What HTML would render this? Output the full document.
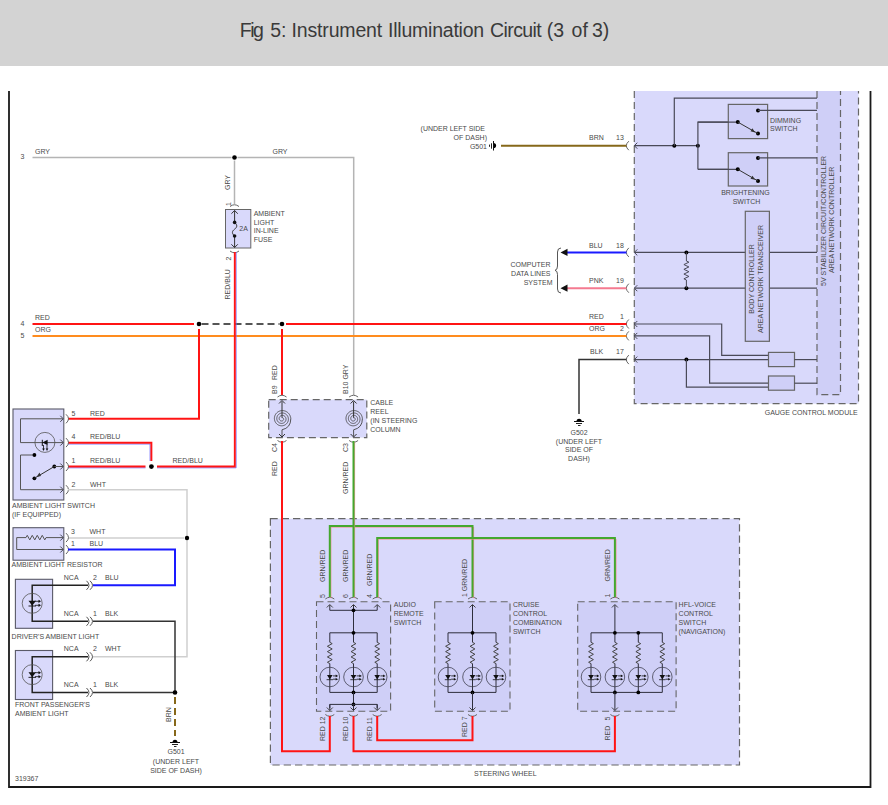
<!DOCTYPE html><html><head><meta charset="utf-8"><style>html,body{margin:0;padding:0;background:#fff;}svg{display:block}</style></head><body>
<svg width="888" height="805" viewBox="0 0 888 805" font-family='"Liberation Sans", sans-serif'>
<rect x="0" y="0" width="888" height="66" fill="#d3d3d3"/>
<text x="239.79999999999998" y="37" font-size="19.5" fill="#3a3a3a" textLength="24.0" lengthAdjust="spacing">Fig</text>
<text x="270.2" y="37" font-size="19.5" fill="#3a3a3a">5:</text>
<text x="291.59999999999997" y="37" font-size="19.5" fill="#3a3a3a" textLength="90.6" lengthAdjust="spacing">Instrument</text>
<text x="388.0" y="37" font-size="19.5" fill="#3a3a3a" textLength="96.2" lengthAdjust="spacing">Illumination</text>
<text x="490.09999999999997" y="37" font-size="19.5" fill="#3a3a3a" textLength="51.6" lengthAdjust="spacing">Circuit</text>
<text x="546.8000000000001" y="37" font-size="19.5" fill="#3a3a3a">(3</text>
<text x="571.6" y="37" font-size="19.5" fill="#3a3a3a">of</text>
<text x="591.9000000000001" y="37" font-size="19.5" fill="#3a3a3a">3)</text>
<path d="M9,91 L9,787 L870.5,787 L870.5,91" fill="none" stroke="#1a1a1a" stroke-width="1.8" />
<rect x="634.3" y="91" width="224.2" height="312.7" fill="#d9d9fb"/>
<path d="M634.3,91 L634.3,403.7 L858.5,403.7 L858.5,91" fill="none" stroke="#666" stroke-width="1.2" stroke-dasharray="7,4"/>
<rect x="817" y="91" width="23.5" height="303.7" fill="#cfcff7" stroke="none"/>
<path d="M817,91 L817,394.7 L840.5,394.7 L840.5,91" fill="none" stroke="#666" stroke-width="1.2" stroke-dasharray="7,4"/>
<text transform="translate(826.0,286) rotate(-90)" text-anchor="start" font-size="7" fill="#4a4a4a">5V STABILIZER CIRCUIT/CONTROLLER</text>
<text transform="translate(834.3,273) rotate(-90)" text-anchor="start" font-size="7" fill="#4a4a4a">AREA NETWORK CONTROLLER</text>
<path d="M634.3,145.7 L697.9,145.7" fill="none" stroke="#4a4a58" stroke-width="1.2" />
<circle cx="674.3" cy="145.7" r="2" fill="#000"/>
<circle cx="697.9" cy="145.7" r="2" fill="#000"/>
<path d="M674.3,145.7 L674.3,98.1 L817,98.1" fill="none" stroke="#4a4a58" stroke-width="1.2" />
<path d="M697.9,169.3 L697.9,122.1 L737.8,122.1" fill="none" stroke="#4a4a58" stroke-width="1.2" />
<path d="M697.9,169.3 L737.8,169.3" fill="none" stroke="#4a4a58" stroke-width="1.2" />
<rect x="728.3" y="104.4" width="39.30000000000007" height="34.19999999999999" fill="#cfcff7" stroke="#666" stroke-width="1.2" />
<rect x="728.3" y="152.7" width="39.30000000000007" height="33.30000000000001" fill="#cfcff7" stroke="#666" stroke-width="1.2" />
<path d="M697.9,122.1 L737.8,122.1" fill="none" stroke="#4a4a58" stroke-width="1.2" />
<path d="M697.9,169.3 L737.8,169.3" fill="none" stroke="#4a4a58" stroke-width="1.2" />
<circle cx="737.8" cy="122.1" r="2" fill="#000"/>
<circle cx="758" cy="110.4" r="2" fill="#000"/>
<circle cx="758" cy="133.6" r="2" fill="#000"/>
<path d="M758,110.4 L817,110.4" fill="none" stroke="#4a4a58" stroke-width="1.2" />
<path d="M737.8,122.1 L758,133.6" fill="none" stroke="#333" stroke-width="1" />
<path d="M755,132.4 L750.5,131.29999999999998 L752.5,128.29999999999998 Z" fill="#333"/>
<circle cx="737.8" cy="169.3" r="2" fill="#000"/>
<circle cx="758" cy="157.9" r="2" fill="#000"/>
<circle cx="758" cy="181" r="2" fill="#000"/>
<path d="M758,157.9 L817,157.9" fill="none" stroke="#4a4a58" stroke-width="1.2" />
<path d="M737.8,169.3 L758,181" fill="none" stroke="#333" stroke-width="1" />
<path d="M755,179.8 L750.5,178.7 L752.5,175.7 Z" fill="#333"/>
<text x="770" y="123" text-anchor="start" font-size="7" fill="#4a4a4a">DIMMING</text>
<text x="770" y="130.8" text-anchor="start" font-size="7" fill="#4a4a4a">SWITCH</text>
<text x="745.5" y="195.2" text-anchor="middle" font-size="7" fill="#4a4a4a">BRIGHTENING</text>
<text x="746.5" y="203.6" text-anchor="middle" font-size="7" fill="#4a4a4a">SWITCH</text>
<path d="M634.3,252.4 L817,252.4" fill="none" stroke="#4a4a58" stroke-width="1.2" />
<path d="M634.3,288.2 L817,288.2" fill="none" stroke="#4a4a58" stroke-width="1.2" />
<circle cx="686.4" cy="252.4" r="2" fill="#000"/>
<circle cx="686.4" cy="288.2" r="2" fill="#000"/>
<path d="M686.4,261 L688.9,262.1875 L683.9,264.5625 L688.9,266.9375 L683.9,269.3125 L688.9,271.6875 L683.9,274.0625 L688.9,276.4375 L683.9,278.8125 L686.4,280" fill="none" stroke="#4a4a58" stroke-width="1" />
<path d="M686.4,252.4 L686.4,261" fill="none" stroke="#4a4a58" stroke-width="1" />
<path d="M686.4,280 L686.4,288.2" fill="none" stroke="#4a4a58" stroke-width="1" />
<rect x="745.3" y="211.3" width="24.100000000000023" height="130.0" fill="#cfcff7" stroke="#666" stroke-width="1.2" />
<text transform="translate(753.8,279) rotate(-90)" text-anchor="middle" font-size="7" fill="#4a4a4a">BODY CONTROLLER</text>
<text transform="translate(762.9,279) rotate(-90)" text-anchor="middle" font-size="7" fill="#4a4a4a">AREA NETWORK TRANSCEIVER</text>
<path d="M634.3,324 L721.7,324 L721.7,355.4 L768.5,355.4" fill="none" stroke="#4a4a58" stroke-width="1.2" />
<path d="M634.3,335.9 L709.6,335.9 L709.6,383.2 L768.5,383.2" fill="none" stroke="#4a4a58" stroke-width="1.2" />
<path d="M634.3,359.6 L768.5,359.6" fill="none" stroke="#4a4a58" stroke-width="1.2" />
<circle cx="686.4" cy="359.6" r="2" fill="#000"/>
<path d="M686.4,359.6 L686.4,387.1 L768.5,387.1" fill="none" stroke="#4a4a58" stroke-width="1.2" />
<rect x="768.5" y="352.4" width="26.0" height="14.200000000000045" fill="#cfcff7" stroke="#666" stroke-width="1.2" />
<rect x="768.5" y="376" width="26.0" height="14.199999999999989" fill="#cfcff7" stroke="#666" stroke-width="1.2" />
<path d="M794.5,359.6 L817,359.6" fill="none" stroke="#4a4a58" stroke-width="1.2" />
<path d="M794.5,383.2 L817,383.2" fill="none" stroke="#4a4a58" stroke-width="1.2" />
<text x="857.8" y="415" text-anchor="end" font-size="7" fill="#4a4a4a">GAUGE CONTROL MODULE</text>
<path d="M637.3,142.7 L634.3,145.7 L637.3,148.7" fill="none" stroke="#4a4a58" stroke-width="1" />
<path d="M628.8,141.2 Q623.8,145.7 628.8,150.2" fill="none" stroke="#666" stroke-width="1"/>
<path d="M637.3,249.4 L634.3,252.4 L637.3,255.4" fill="none" stroke="#4a4a58" stroke-width="1" />
<path d="M628.8,247.9 Q623.8,252.4 628.8,256.9" fill="none" stroke="#666" stroke-width="1"/>
<path d="M637.3,285.2 L634.3,288.2 L637.3,291.2" fill="none" stroke="#4a4a58" stroke-width="1" />
<path d="M628.8,283.7 Q623.8,288.2 628.8,292.7" fill="none" stroke="#666" stroke-width="1"/>
<path d="M637.3,321 L634.3,324 L637.3,327" fill="none" stroke="#4a4a58" stroke-width="1" />
<path d="M628.8,319.5 Q623.8,324 628.8,328.5" fill="none" stroke="#666" stroke-width="1"/>
<path d="M637.3,332.9 L634.3,335.9 L637.3,338.9" fill="none" stroke="#4a4a58" stroke-width="1" />
<path d="M628.8,331.4 Q623.8,335.9 628.8,340.4" fill="none" stroke="#666" stroke-width="1"/>
<path d="M637.3,356.6 L634.3,359.6 L637.3,362.6" fill="none" stroke="#4a4a58" stroke-width="1" />
<path d="M628.8,355.1 Q623.8,359.6 628.8,364.1" fill="none" stroke="#666" stroke-width="1"/>
<path d="M501,145.7 L626.5,145.7" fill="none" stroke="#86681a" stroke-width="2" />
<path d="M493.5,143 A2.6,2.6 0 1 1 493.5,148.2 Z" fill="#000"/>
<path d="M493.5,141 L493.5,150.5" fill="none" stroke="#111" stroke-width="1" />
<path d="M491.5,143.3 L491.5,148.7" fill="none" stroke="#222" stroke-width="1" />
<path d="M489.5,144.6 L489.5,146.8" fill="none" stroke="#222" stroke-width="1" />
<text x="487" y="148.5" text-anchor="end" font-size="7" fill="#4a4a4a">G501</text>
<text x="485" y="131" text-anchor="end" font-size="7" fill="#4a4a4a">(UNDER LEFT SIDE</text>
<text x="487" y="139.5" text-anchor="end" font-size="7" fill="#4a4a4a">OF DASH)</text>
<text x="589" y="139.5" text-anchor="start" font-size="7" fill="#4a4a4a">BRN</text>
<text x="616" y="139.5" text-anchor="start" font-size="7" fill="#4a4a4a">13</text>
<path d="M566,252.4 L626.5,252.4" fill="none" stroke="#1a1aff" stroke-width="2" />
<path d="M560.5,252.4 L567.5,248.8 L567.5,256 Z" fill="#111"/>
<path d="M566,288.2 L626.5,288.2" fill="none" stroke="#f47a90" stroke-width="2" />
<path d="M560.5,288.2 L567.5,284.6 L567.5,291.8 Z" fill="#111"/>
<text x="589" y="247.5" text-anchor="start" font-size="7" fill="#4a4a4a">BLU</text>
<text x="616" y="247.5" text-anchor="start" font-size="7" fill="#4a4a4a">18</text>
<text x="589" y="282.5" text-anchor="start" font-size="7" fill="#4a4a4a">PNK</text>
<text x="616" y="282.5" text-anchor="start" font-size="7" fill="#4a4a4a">19</text>
<path d="M561,248 Q557.5,248 557.5,252 L557.5,266 Q557.5,270 555,270.3 Q557.5,270.6 557.5,274.6 L557.5,289 Q557.5,293 561,293" fill="none" stroke="#444" stroke-width="0.9"/>
<text x="550.5" y="267.3" text-anchor="end" font-size="7" fill="#4a4a4a">COMPUTER</text>
<text x="550.5" y="276.3" text-anchor="end" font-size="7" fill="#4a4a4a">DATA LINES</text>
<text x="552.5" y="285.3" text-anchor="end" font-size="7" fill="#4a4a4a">SYSTEM</text>
<path d="M626.5,359.6 L579,359.6 L579,414" fill="none" stroke="#333" stroke-width="1.5" />
<text x="590" y="354" text-anchor="start" font-size="7" fill="#4a4a4a">BLK</text>
<text x="616" y="354" text-anchor="start" font-size="7" fill="#4a4a4a">17</text>
<path d="M576.5,421.4 A2.6,2.6 0 1 1 581.7,421.4 Z" fill="#000"/>
<path d="M574,421.5 L584,421.5" fill="none" stroke="#111" stroke-width="1" />
<path d="M576,423.5 L582,423.5" fill="none" stroke="#222" stroke-width="1" />
<path d="M578,425.5 L580.5,425.5" fill="none" stroke="#222" stroke-width="1" />
<text x="579" y="435" text-anchor="middle" font-size="7" fill="#4a4a4a">G502</text>
<text x="579" y="443.8" text-anchor="middle" font-size="7" fill="#4a4a4a">(UNDER LEFT</text>
<text x="579" y="452.3" text-anchor="middle" font-size="7" fill="#4a4a4a">SIDE OF</text>
<text x="579" y="460.8" text-anchor="middle" font-size="7" fill="#4a4a4a">DASH)</text>
<text x="22.5" y="159" text-anchor="middle" font-size="7" fill="#4a4a4a">3</text>
<path d="M32.5,157.5 L231.5,157.5" fill="none" stroke="#b4b4b4" stroke-width="1.5" />
<path d="M237.5,157.5 L353.7,157.5 L353.7,395" fill="none" stroke="#b4b4b4" stroke-width="1.5" />
<circle cx="234.5" cy="157.5" r="2.3" fill="#000"/>
<text x="35" y="153.5" text-anchor="start" font-size="7" fill="#4a4a4a">GRY</text>
<text x="272.5" y="153.5" text-anchor="start" font-size="7" fill="#4a4a4a">GRY</text>
<path d="M234.5,160.5 L234.5,204" fill="none" stroke="#b4b4b4" stroke-width="1.5" />
<text transform="translate(229.5,190) rotate(-90)" text-anchor="start" font-size="7" fill="#4a4a4a">GRY</text>
<text transform="translate(230.5,206) rotate(-90)" text-anchor="start" font-size="7" fill="#4a4a4a">1</text>
<rect x="225.5" y="209.5" width="25.30000000000001" height="38.5" fill="#d9d9fb" stroke="#666" stroke-width="1" />
<path d="M230.0,206.5 Q234.5,203.0 239.0,206.5" fill="none" stroke="#666" stroke-width="1"/>
<path d="M230.0,251 Q234.5,254.5 239.0,251" fill="none" stroke="#666" stroke-width="1"/>
<path d="M234.6,210.5 L234.6,222" fill="none" stroke="#333" stroke-width="1" />
<path d="M234.6,236 L234.6,247.5" fill="none" stroke="#333" stroke-width="1" />
<path d="M231.4,213.7 L234.6,210.5 L237.79999999999998,213.7" fill="none" stroke="#333" stroke-width="1" />
<path d="M231.4,244.3 L234.6,247.5 L237.79999999999998,244.3" fill="none" stroke="#333" stroke-width="1" />
<path d="M234.6,222.4 C237.5,225 237.5,227 234.6,229.2 C231.7,231.4 231.7,233.4 234.6,236" fill="none" stroke="#333" stroke-width="1"/>
<circle cx="234.6" cy="222.4" r="1.8" fill="#111"/>
<circle cx="234.6" cy="236" r="1.8" fill="#111"/>
<text x="239.3" y="231.2" text-anchor="start" font-size="7" fill="#4a4a4a">2A</text>
<text x="253.7" y="216" text-anchor="start" font-size="7" fill="#4a4a4a">AMBIENT</text>
<text x="253.7" y="225" text-anchor="start" font-size="7" fill="#4a4a4a">LIGHT</text>
<text x="253.7" y="233" text-anchor="start" font-size="7" fill="#4a4a4a">IN-LINE</text>
<text x="253.7" y="242" text-anchor="start" font-size="7" fill="#4a4a4a">FUSE</text>
<text transform="translate(230.5,260.5) rotate(-90)" text-anchor="start" font-size="7" fill="#4a4a4a">2</text>
<text transform="translate(229.5,299.5) rotate(-90)" text-anchor="start" font-size="7" fill="#4a4a4a">RED/BLU</text>
<text x="22.5" y="325.5" text-anchor="middle" font-size="7" fill="#4a4a4a">4</text>
<text x="22.5" y="337.5" text-anchor="middle" font-size="7" fill="#4a4a4a">5</text>
<path d="M32.5,324 L194,324" fill="none" stroke="#ff1414" stroke-width="2" />
<circle cx="199" cy="324" r="2.3" fill="#000"/>
<circle cx="282" cy="324" r="2.3" fill="#000"/>
<path d="M201.5,324 L279.5,324" fill="none" stroke="#555" stroke-width="1.8" stroke-dasharray="7,4"/>
<path d="M286,324 L626.5,324" fill="none" stroke="#ff1414" stroke-width="2" />
<path d="M32.5,336 L626.5,336" fill="none" stroke="#ff8c1e" stroke-width="2" />
<text x="35" y="320" text-anchor="start" font-size="7" fill="#4a4a4a">RED</text>
<text x="35" y="332" text-anchor="start" font-size="7" fill="#4a4a4a">ORG</text>
<text x="589" y="318.7" text-anchor="start" font-size="7" fill="#4a4a4a">RED</text>
<text x="620" y="318.7" text-anchor="start" font-size="7" fill="#4a4a4a">1</text>
<text x="589" y="330.7" text-anchor="start" font-size="7" fill="#4a4a4a">ORG</text>
<text x="620" y="330.7" text-anchor="start" font-size="7" fill="#4a4a4a">2</text>
<path d="M199,329 L199,418.8 L68,418.8" fill="none" stroke="#ff1414" stroke-width="2" />
<path d="M236.1,252 L236.1,467.8 L157,467.8" fill="none" stroke="#7070ff" stroke-width="0.9" />
<path d="M234.8,252 L234.8,466.5 L157,466.5" fill="none" stroke="#ff1414" stroke-width="1.9" />
<circle cx="151.4" cy="466.6" r="2.4" fill="#000"/>
<path d="M145.5,467.8 L68,467.8" fill="none" stroke="#7070ff" stroke-width="0.9" />
<path d="M145.5,466.5 L68,466.5" fill="none" stroke="#ff1414" stroke-width="1.9" />
<path d="M68,444 L150.1,444 L150.1,461" fill="none" stroke="#7070ff" stroke-width="0.9" />
<path d="M68,442.7 L151.4,442.7 L151.4,461" fill="none" stroke="#ff1414" stroke-width="1.9" />
<text x="90" y="416" text-anchor="start" font-size="7" fill="#4a4a4a">RED</text>
<text x="90" y="439.2" text-anchor="start" font-size="7" fill="#4a4a4a">RED/BLU</text>
<text x="90" y="462.5" text-anchor="start" font-size="7" fill="#4a4a4a">RED/BLU</text>
<text x="172.5" y="462.5" text-anchor="start" font-size="7" fill="#4a4a4a">RED/BLU</text>
<text x="90" y="487" text-anchor="start" font-size="7" fill="#4a4a4a">WHT</text>
<text x="71.5" y="416" text-anchor="start" font-size="7" fill="#4a4a4a">5</text>
<text x="71.5" y="439.2" text-anchor="start" font-size="7" fill="#4a4a4a">4</text>
<text x="71.5" y="462.5" text-anchor="start" font-size="7" fill="#4a4a4a">1</text>
<text x="71.5" y="486.5" text-anchor="start" font-size="7" fill="#4a4a4a">2</text>
<path d="M282,329 L282,395" fill="none" stroke="#ff1414" stroke-width="2" />
<text transform="translate(276.5,380) rotate(-90)" text-anchor="start" font-size="7" fill="#4a4a4a">RED</text>
<text transform="translate(276.5,394) rotate(-90)" text-anchor="start" font-size="7" fill="#4a4a4a">B9</text>
<text transform="translate(347.8,394) rotate(-90)" text-anchor="start" font-size="7" fill="#4a4a4a">B10 GRY</text>
<rect x="268.7" y="399.6" width="98.10000000000002" height="38.0" fill="#d9d9fb" stroke="#666" stroke-width="1.2" stroke-dasharray="7,4"/>
<path d="M277.5,397 Q282,393.5 286.5,397" fill="none" stroke="#666" stroke-width="1"/>
<path d="M277.5,440.5 Q282,444.0 286.5,440.5" fill="none" stroke="#666" stroke-width="1"/>
<path d="M279,403.5 L282,400.5 L285,403.5" fill="none" stroke="#333" stroke-width="1" />
<path d="M279,434 L282,437 L285,434" fill="none" stroke="#333" stroke-width="1" />
<path d="M282.0,417.8 L282.09,417.77 L282.18,417.75 L282.28,417.74 L282.38,417.73 L282.48,417.74 L282.58,417.76 L282.69,417.78 L282.79,417.82 L282.9,417.87 L283.0,417.93 L283.09,417.99 L283.19,418.07 L283.27,418.16 L283.35,418.26 L283.42,418.37 L283.49,418.48 L283.54,418.61 L283.58,418.74 L283.62,418.87 L283.64,419.02 L283.64,419.16 L283.64,419.31 L283.62,419.46 L283.59,419.61 L283.54,419.76 L283.48,419.9 L283.4,420.05 L283.31,420.19 L283.21,420.32 L283.1,420.44 L282.97,420.56 L282.83,420.66 L282.68,420.76 L282.52,420.84 L282.35,420.91 L282.17,420.96 L281.99,421.0 L281.8,421.03 L281.6,421.03 L281.4,421.02 L281.21,420.99 L281.01,420.95 L280.81,420.88 L280.62,420.8 L280.44,420.7 L280.26,420.59 L280.09,420.45 L279.93,420.3 L279.78,420.14 L279.65,419.96 L279.53,419.77 L279.42,419.56 L279.33,419.35 L279.26,419.12 L279.21,418.89 L279.18,418.65 L279.17,418.41 L279.19,418.16 L279.22,417.92 L279.27,417.67 L279.35,417.43 L279.45,417.19 L279.57,416.96 L279.71,416.74 L279.87,416.53 L280.05,416.33 L280.25,416.15 L280.47,415.98 L280.7,415.83 L280.95,415.7 L281.21,415.59 L281.48,415.5 L281.76,415.44 L282.04,415.4 L282.34,415.38 L282.63,415.39 L282.93,415.42 L283.22,415.48 L283.51,415.57 L283.8,415.68 L284.08,415.82 L284.34,415.98 L284.6,416.17 L284.84,416.38 L285.06,416.61 L285.26,416.86 L285.44,417.13 L285.6,417.42 L285.74,417.72 L285.85,418.03 L285.93,418.36 L285.99,418.7 L286.02,419.04 L286.01,419.38 L285.98,419.73 L285.92,420.07 L285.83,420.41 L285.7,420.75 L285.55,421.07 L285.37,421.39 L285.16,421.69 L284.93,421.97 L284.67,422.23 L284.39,422.47 L284.08,422.69 L283.75,422.88 L283.41,423.05 L283.05,423.19 L282.68,423.29 L282.3,423.37 L281.91,423.41 L281.51,423.41 L281.12,423.39 L280.72,423.33 L280.33,423.23 L279.95,423.11 L279.57,422.94 L279.21,422.75 L278.86,422.52 L278.54,422.26 L278.23,421.98 L277.95,421.67 L277.69,421.33 L277.46,420.97 L277.26,420.58 L277.1,420.18 L276.96,419.77 L276.87,419.34 L276.81,418.9 L276.79,418.46 L276.8,418.01 L276.86,417.57 L276.95,417.12 L277.08,416.69 L277.25,416.26 L277.45,415.85 L277.7,415.45 L277.97,415.08 L278.28,414.72 L278.62,414.4 L278.99,414.1 L279.39,413.83 L279.8,413.6 L280.24,413.4 L280.7,413.24 L281.18,413.11 L281.66,413.03 L282.15,412.99 L282.65,412.99 L283.15,413.04 L283.64,413.12 L284.13,413.25 L284.61,413.43 L285.07,413.64 L285.52,413.89 L285.94,414.18 L286.34,414.51 L286.72,414.88 L287.06,415.27 L287.37,415.7 L287.64,416.15 L287.88,416.63 L288.07,417.13 L288.22,417.65 L288.33,418.18 L288.39,418.72 L288.41,419.26 L288.38,419.81 L288.3,420.36 L288.18,420.9 L288.01,421.43 L287.79,421.94 L287.53,422.44 L287.23,422.92 L286.88,423.37 L286.5,423.79 L286.08,424.18 L285.62,424.54 L285.13,424.85 L284.62,425.13 L284.08,425.36 L283.53,425.54 L282.95,425.68 L282.37,425.77 L281.77,425.81 L281.17,425.8 L280.57,425.73 L279.98,425.62 L279.4,425.45 L278.83,425.24 L278.27,424.97 L277.74,424.66 L277.24,424.3 L276.77,423.9 L276.33,423.45 L275.93,422.97 L275.57,422.46 L275.25,421.91 L274.98,421.34 L274.76,420.74 L274.58,420.12 L274.47,419.49 L274.4,418.85 L274.39,418.2 L274.44,417.55 L274.54,416.91 L274.7,416.27 L274.91,415.64 L275.18,415.04 L275.49,414.45 L275.86,413.9 L276.28,413.37 L276.74,412.88 L277.24,412.43 L277.78,412.02 L278.36,411.65 L278.97,411.34 L279.6,411.08 L280.26,410.87 L280.94,410.72 L281.63,410.63 L282.32,410.59 L283.02,410.62 L283.72,410.7 L284.41,410.85 L285.09,411.05 L285.75,411.31 L286.39,411.63 L287.01,412.0 L287.59,412.43 L288.13,412.9 L288.64,413.43 L289.1,413.99 L289.51,414.6 L289.87,415.24 L290.17,415.91 L290.42,416.6 L290.61,417.32 L290.74,418.05 L290.8,418.8" fill="none" stroke="#444" stroke-width="0.85"/>
<path d="M282,401.5 L282,417.8" fill="none" stroke="#333" stroke-width="1" />
<path d="M290.8,418.8 Q290.8,427.8 282,429.8 L282,436.5" fill="none" stroke="#444" stroke-width="0.9"/>
<path d="M349.1,397 Q353.6,393.5 358.1,397" fill="none" stroke="#666" stroke-width="1"/>
<path d="M349.1,440.5 Q353.6,444.0 358.1,440.5" fill="none" stroke="#666" stroke-width="1"/>
<path d="M350.6,403.5 L353.6,400.5 L356.6,403.5" fill="none" stroke="#333" stroke-width="1" />
<path d="M350.6,434 L353.6,437 L356.6,434" fill="none" stroke="#333" stroke-width="1" />
<path d="M353.6,417.8 L353.69,417.77 L353.78,417.75 L353.88,417.74 L353.98,417.73 L354.08,417.74 L354.18,417.76 L354.29,417.78 L354.39,417.82 L354.5,417.87 L354.6,417.93 L354.69,417.99 L354.79,418.07 L354.87,418.16 L354.95,418.26 L355.02,418.37 L355.09,418.48 L355.14,418.61 L355.18,418.74 L355.22,418.87 L355.24,419.02 L355.24,419.16 L355.24,419.31 L355.22,419.46 L355.19,419.61 L355.14,419.76 L355.08,419.9 L355.0,420.05 L354.91,420.19 L354.81,420.32 L354.7,420.44 L354.57,420.56 L354.43,420.66 L354.28,420.76 L354.12,420.84 L353.95,420.91 L353.77,420.96 L353.59,421.0 L353.4,421.03 L353.2,421.03 L353.0,421.02 L352.81,420.99 L352.61,420.95 L352.41,420.88 L352.22,420.8 L352.04,420.7 L351.86,420.59 L351.69,420.45 L351.53,420.3 L351.38,420.14 L351.25,419.96 L351.13,419.77 L351.02,419.56 L350.93,419.35 L350.86,419.12 L350.81,418.89 L350.78,418.65 L350.77,418.41 L350.79,418.16 L350.82,417.92 L350.87,417.67 L350.95,417.43 L351.05,417.19 L351.17,416.96 L351.31,416.74 L351.47,416.53 L351.65,416.33 L351.85,416.15 L352.07,415.98 L352.3,415.83 L352.55,415.7 L352.81,415.59 L353.08,415.5 L353.36,415.44 L353.64,415.4 L353.94,415.38 L354.23,415.39 L354.53,415.42 L354.82,415.48 L355.11,415.57 L355.4,415.68 L355.68,415.82 L355.94,415.98 L356.2,416.17 L356.44,416.38 L356.66,416.61 L356.86,416.86 L357.04,417.13 L357.2,417.42 L357.34,417.72 L357.45,418.03 L357.53,418.36 L357.59,418.7 L357.62,419.04 L357.61,419.38 L357.58,419.73 L357.52,420.07 L357.43,420.41 L357.3,420.75 L357.15,421.07 L356.97,421.39 L356.76,421.69 L356.53,421.97 L356.27,422.23 L355.99,422.47 L355.68,422.69 L355.35,422.88 L355.01,423.05 L354.65,423.19 L354.28,423.29 L353.9,423.37 L353.51,423.41 L353.11,423.41 L352.72,423.39 L352.32,423.33 L351.93,423.23 L351.55,423.11 L351.17,422.94 L350.81,422.75 L350.46,422.52 L350.14,422.26 L349.83,421.98 L349.55,421.67 L349.29,421.33 L349.06,420.97 L348.86,420.58 L348.7,420.18 L348.56,419.77 L348.47,419.34 L348.41,418.9 L348.39,418.46 L348.4,418.01 L348.46,417.57 L348.55,417.12 L348.68,416.69 L348.85,416.26 L349.05,415.85 L349.3,415.45 L349.57,415.08 L349.88,414.72 L350.22,414.4 L350.59,414.1 L350.99,413.83 L351.4,413.6 L351.84,413.4 L352.3,413.24 L352.78,413.11 L353.26,413.03 L353.75,412.99 L354.25,412.99 L354.75,413.04 L355.24,413.12 L355.73,413.25 L356.21,413.43 L356.67,413.64 L357.12,413.89 L357.54,414.18 L357.94,414.51 L358.32,414.88 L358.66,415.27 L358.97,415.7 L359.24,416.15 L359.48,416.63 L359.67,417.13 L359.82,417.65 L359.93,418.18 L359.99,418.72 L360.01,419.26 L359.98,419.81 L359.9,420.36 L359.78,420.9 L359.61,421.43 L359.39,421.94 L359.13,422.44 L358.83,422.92 L358.48,423.37 L358.1,423.79 L357.68,424.18 L357.22,424.54 L356.73,424.85 L356.22,425.13 L355.68,425.36 L355.13,425.54 L354.55,425.68 L353.97,425.77 L353.37,425.81 L352.77,425.8 L352.17,425.73 L351.58,425.62 L351.0,425.45 L350.43,425.24 L349.87,424.97 L349.34,424.66 L348.84,424.3 L348.37,423.9 L347.93,423.45 L347.53,422.97 L347.17,422.46 L346.85,421.91 L346.58,421.34 L346.36,420.74 L346.18,420.12 L346.07,419.49 L346.0,418.85 L345.99,418.2 L346.04,417.55 L346.14,416.91 L346.3,416.27 L346.51,415.64 L346.78,415.04 L347.09,414.45 L347.46,413.9 L347.88,413.37 L348.34,412.88 L348.84,412.43 L349.38,412.02 L349.96,411.65 L350.57,411.34 L351.2,411.08 L351.86,410.87 L352.54,410.72 L353.23,410.63 L353.92,410.59 L354.62,410.62 L355.32,410.7 L356.01,410.85 L356.69,411.05 L357.35,411.31 L357.99,411.63 L358.61,412.0 L359.19,412.43 L359.73,412.9 L360.24,413.43 L360.7,413.99 L361.11,414.6 L361.47,415.24 L361.77,415.91 L362.02,416.6 L362.21,417.32 L362.34,418.05 L362.4,418.8" fill="none" stroke="#444" stroke-width="0.85"/>
<path d="M353.6,401.5 L353.6,417.8" fill="none" stroke="#333" stroke-width="1" />
<path d="M362.40000000000003,418.8 Q362.40000000000003,427.8 353.6,429.8 L353.6,436.5" fill="none" stroke="#444" stroke-width="0.9"/>
<text x="370.3" y="405" text-anchor="start" font-size="7" fill="#4a4a4a">CABLE</text>
<text x="370.3" y="414" text-anchor="start" font-size="7" fill="#4a4a4a">REEL</text>
<text x="370.3" y="423" text-anchor="start" font-size="7" fill="#4a4a4a">(IN STEERING</text>
<text x="370.3" y="432" text-anchor="start" font-size="7" fill="#4a4a4a">COLUMN</text>
<text transform="translate(276.5,452) rotate(-90)" text-anchor="start" font-size="7" fill="#4a4a4a">C4</text>
<text transform="translate(276.5,476) rotate(-90)" text-anchor="start" font-size="7" fill="#4a4a4a">RED</text>
<text transform="translate(347.8,452) rotate(-90)" text-anchor="start" font-size="7" fill="#4a4a4a">C3</text>
<text transform="translate(347.8,494) rotate(-90)" text-anchor="start" font-size="7" fill="#4a4a4a">GRN/RED</text>
<rect x="270.4" y="518.7" width="469.1" height="246.29999999999995" fill="#d9d9fb" stroke="#666" stroke-width="1.2" stroke-dasharray="7.3,4"/>
<text x="474" y="776" text-anchor="start" font-size="7" fill="#4a4a4a">STEERING WHEEL</text>
<rect x="316.5" y="601.7" width="74.10000000000002" height="109.59999999999991" fill="#cfcff7" stroke="#666" stroke-width="1.1" stroke-dasharray="7,4"/>
<rect x="434.7" y="601.7" width="75.30000000000001" height="109.59999999999991" fill="#cfcff7" stroke="#666" stroke-width="1.1" stroke-dasharray="7,4"/>
<rect x="577.7" y="601.7" width="98.39999999999998" height="109.59999999999991" fill="#cfcff7" stroke="#666" stroke-width="1.1" stroke-dasharray="7,4"/>
<text x="393.8" y="607" text-anchor="start" font-size="7" fill="#4a4a4a">AUDIO</text>
<text x="393.8" y="616" text-anchor="start" font-size="7" fill="#4a4a4a">REMOTE</text>
<text x="393.8" y="625" text-anchor="start" font-size="7" fill="#4a4a4a">SWITCH</text>
<text x="512.9" y="607" text-anchor="start" font-size="7" fill="#4a4a4a">CRUISE</text>
<text x="512.9" y="616" text-anchor="start" font-size="7" fill="#4a4a4a">CONTROL</text>
<text x="512.9" y="625" text-anchor="start" font-size="7" fill="#4a4a4a">COMBINATION</text>
<text x="512.9" y="634" text-anchor="start" font-size="7" fill="#4a4a4a">SWITCH</text>
<text x="678.6" y="607" text-anchor="start" font-size="7" fill="#4a4a4a">HFL-VOICE</text>
<text x="678.6" y="616" text-anchor="start" font-size="7" fill="#4a4a4a">CONTROL</text>
<text x="678.6" y="625" text-anchor="start" font-size="7" fill="#4a4a4a">SWITCH</text>
<text x="678.6" y="634" text-anchor="start" font-size="7" fill="#4a4a4a">(NAVIGATION)</text>
<path d="M353.5,605 L353.5,632.8" fill="none" stroke="#2e2e3c" stroke-width="1" />
<path d="M329.8,642.3 L329.8,632.8 L377.2,632.8 L377.2,642.3" fill="none" stroke="#2e2e3c" stroke-width="1" />
<path d="M329.8,642.3 L332.2,643.6312499999999 L327.40000000000003,646.2937499999999 L332.2,648.95625 L327.40000000000003,651.61875 L332.2,654.28125 L327.40000000000003,656.94375 L332.2,659.60625 L327.40000000000003,662.2687500000001 L329.8,663.6" fill="none" stroke="#444" stroke-width="1" />
<path d="M329.8,663.6 L329.8,692.4" fill="none" stroke="#2e2e3c" stroke-width="1" />
<circle cx="329.8" cy="677" r="9.8" fill="none" stroke="#3a3a48" stroke-width="0.75"/>
<path d="M327.0,675.1 L332.6,675.1 L329.8,679.6 Z" fill="#111"/>
<path d="M326.6,679.7 L333.0,679.7" fill="none" stroke="#111" stroke-width="0.8" />
<path d="M333.0,675.9 L336.3,675.9" fill="none" stroke="#111" stroke-width="0.8" />
<path d="M338.1,675.9 L335.7,674.6 L335.7,677.1999999999999 Z" fill="#111"/>
<path d="M333.0,679.2 L336.3,679.2" fill="none" stroke="#111" stroke-width="0.8" />
<path d="M338.1,679.2 L335.7,677.9000000000001 L335.7,680.5 Z" fill="#111"/>
<path d="M353.5,632.8 L353.5,642.3" fill="none" stroke="#2e2e3c" stroke-width="1" />
<path d="M353.5,642.3 L355.9,643.6312499999999 L351.1,646.2937499999999 L355.9,648.95625 L351.1,651.61875 L355.9,654.28125 L351.1,656.94375 L355.9,659.60625 L351.1,662.2687500000001 L353.5,663.6" fill="none" stroke="#444" stroke-width="1" />
<path d="M353.5,663.6 L353.5,692.4" fill="none" stroke="#2e2e3c" stroke-width="1" />
<circle cx="353.5" cy="677" r="9.8" fill="none" stroke="#3a3a48" stroke-width="0.75"/>
<path d="M350.7,675.1 L356.3,675.1 L353.5,679.6 Z" fill="#111"/>
<path d="M350.3,679.7 L356.7,679.7" fill="none" stroke="#111" stroke-width="0.8" />
<path d="M356.7,675.9 L360.0,675.9" fill="none" stroke="#111" stroke-width="0.8" />
<path d="M361.8,675.9 L359.4,674.6 L359.4,677.1999999999999 Z" fill="#111"/>
<path d="M356.7,679.2 L360.0,679.2" fill="none" stroke="#111" stroke-width="0.8" />
<path d="M361.8,679.2 L359.4,677.9000000000001 L359.4,680.5 Z" fill="#111"/>
<path d="M377.2,642.3 L379.59999999999997,643.6312499999999 L374.8,646.2937499999999 L379.59999999999997,648.95625 L374.8,651.61875 L379.59999999999997,654.28125 L374.8,656.94375 L379.59999999999997,659.60625 L374.8,662.2687500000001 L377.2,663.6" fill="none" stroke="#444" stroke-width="1" />
<path d="M377.2,663.6 L377.2,692.4" fill="none" stroke="#2e2e3c" stroke-width="1" />
<circle cx="377.2" cy="677" r="9.8" fill="none" stroke="#3a3a48" stroke-width="0.75"/>
<path d="M374.4,675.1 L380.0,675.1 L377.2,679.6 Z" fill="#111"/>
<path d="M374.0,679.7 L380.4,679.7" fill="none" stroke="#111" stroke-width="0.8" />
<path d="M380.4,675.9 L383.7,675.9" fill="none" stroke="#111" stroke-width="0.8" />
<path d="M385.5,675.9 L383.09999999999997,674.6 L383.09999999999997,677.1999999999999 Z" fill="#111"/>
<path d="M380.4,679.2 L383.7,679.2" fill="none" stroke="#111" stroke-width="0.8" />
<path d="M385.5,679.2 L383.09999999999997,677.9000000000001 L383.09999999999997,680.5 Z" fill="#111"/>
<path d="M329.8,692.4 L377.2,692.4" fill="none" stroke="#2e2e3c" stroke-width="1" />
<circle cx="353.5" cy="632.8" r="1.9" fill="#000"/>
<circle cx="353.5" cy="692.4" r="1.9" fill="#000"/>
<path d="M329.8,605 L329.8,610.3 L377.2,610.3 L377.2,605" fill="none" stroke="#2e2e3c" stroke-width="1" />
<circle cx="353.5" cy="610.3" r="1.9" fill="#000"/>
<path d="M353.5,692.4 L353.5,704.4" fill="none" stroke="#2e2e3c" stroke-width="1" />
<circle cx="353.5" cy="704.4" r="1.9" fill="#000"/>
<path d="M329.8,708 L329.8,704.4 L377.2,704.4 L377.2,708" fill="none" stroke="#2e2e3c" stroke-width="1" />
<path d="M326.8,607.5 L329.8,604.5 L332.8,607.5" fill="none" stroke="#444" stroke-width="1" />
<path d="M325.3,599 Q329.8,595.5 334.3,599" fill="none" stroke="#666" stroke-width="1"/>
<path d="M329.8,704.4 L329.8,710.5" fill="none" stroke="#2e2e3c" stroke-width="1" />
<path d="M326.8,707.5 L329.8,710.5 L332.8,707.5" fill="none" stroke="#444" stroke-width="1" />
<path d="M325.3,714.5 Q329.8,718.0 334.3,714.5" fill="none" stroke="#666" stroke-width="1"/>
<path d="M350.5,607.5 L353.5,604.5 L356.5,607.5" fill="none" stroke="#444" stroke-width="1" />
<path d="M349.0,599 Q353.5,595.5 358.0,599" fill="none" stroke="#666" stroke-width="1"/>
<path d="M353.5,704.4 L353.5,710.5" fill="none" stroke="#2e2e3c" stroke-width="1" />
<path d="M350.5,707.5 L353.5,710.5 L356.5,707.5" fill="none" stroke="#444" stroke-width="1" />
<path d="M349.0,714.5 Q353.5,718.0 358.0,714.5" fill="none" stroke="#666" stroke-width="1"/>
<path d="M374.2,607.5 L377.2,604.5 L380.2,607.5" fill="none" stroke="#444" stroke-width="1" />
<path d="M372.7,599 Q377.2,595.5 381.7,599" fill="none" stroke="#666" stroke-width="1"/>
<path d="M377.2,704.4 L377.2,710.5" fill="none" stroke="#2e2e3c" stroke-width="1" />
<path d="M374.2,707.5 L377.2,710.5 L380.2,707.5" fill="none" stroke="#444" stroke-width="1" />
<path d="M372.7,714.5 Q377.2,718.0 381.7,714.5" fill="none" stroke="#666" stroke-width="1"/>
<path d="M472.5,605 L472.5,632.8" fill="none" stroke="#2e2e3c" stroke-width="1" />
<path d="M448,642.3 L448,632.8 L496,632.8 L496,642.3" fill="none" stroke="#2e2e3c" stroke-width="1" />
<path d="M448,642.3 L450.4,643.6312499999999 L445.6,646.2937499999999 L450.4,648.95625 L445.6,651.61875 L450.4,654.28125 L445.6,656.94375 L450.4,659.60625 L445.6,662.2687500000001 L448,663.6" fill="none" stroke="#444" stroke-width="1" />
<path d="M448,663.6 L448,692.4" fill="none" stroke="#2e2e3c" stroke-width="1" />
<circle cx="448" cy="677" r="9.8" fill="none" stroke="#3a3a48" stroke-width="0.75"/>
<path d="M445.2,675.1 L450.8,675.1 L448,679.6 Z" fill="#111"/>
<path d="M444.8,679.7 L451.2,679.7" fill="none" stroke="#111" stroke-width="0.8" />
<path d="M451.2,675.9 L454.5,675.9" fill="none" stroke="#111" stroke-width="0.8" />
<path d="M456.3,675.9 L453.9,674.6 L453.9,677.1999999999999 Z" fill="#111"/>
<path d="M451.2,679.2 L454.5,679.2" fill="none" stroke="#111" stroke-width="0.8" />
<path d="M456.3,679.2 L453.9,677.9000000000001 L453.9,680.5 Z" fill="#111"/>
<path d="M472.5,632.8 L472.5,642.3" fill="none" stroke="#2e2e3c" stroke-width="1" />
<path d="M472.5,642.3 L474.9,643.6312499999999 L470.1,646.2937499999999 L474.9,648.95625 L470.1,651.61875 L474.9,654.28125 L470.1,656.94375 L474.9,659.60625 L470.1,662.2687500000001 L472.5,663.6" fill="none" stroke="#444" stroke-width="1" />
<path d="M472.5,663.6 L472.5,692.4" fill="none" stroke="#2e2e3c" stroke-width="1" />
<circle cx="472.5" cy="677" r="9.8" fill="none" stroke="#3a3a48" stroke-width="0.75"/>
<path d="M469.7,675.1 L475.3,675.1 L472.5,679.6 Z" fill="#111"/>
<path d="M469.3,679.7 L475.7,679.7" fill="none" stroke="#111" stroke-width="0.8" />
<path d="M475.7,675.9 L479.0,675.9" fill="none" stroke="#111" stroke-width="0.8" />
<path d="M480.8,675.9 L478.4,674.6 L478.4,677.1999999999999 Z" fill="#111"/>
<path d="M475.7,679.2 L479.0,679.2" fill="none" stroke="#111" stroke-width="0.8" />
<path d="M480.8,679.2 L478.4,677.9000000000001 L478.4,680.5 Z" fill="#111"/>
<path d="M496,642.3 L498.4,643.6312499999999 L493.6,646.2937499999999 L498.4,648.95625 L493.6,651.61875 L498.4,654.28125 L493.6,656.94375 L498.4,659.60625 L493.6,662.2687500000001 L496,663.6" fill="none" stroke="#444" stroke-width="1" />
<path d="M496,663.6 L496,692.4" fill="none" stroke="#2e2e3c" stroke-width="1" />
<circle cx="496" cy="677" r="9.8" fill="none" stroke="#3a3a48" stroke-width="0.75"/>
<path d="M493.2,675.1 L498.8,675.1 L496,679.6 Z" fill="#111"/>
<path d="M492.8,679.7 L499.2,679.7" fill="none" stroke="#111" stroke-width="0.8" />
<path d="M499.2,675.9 L502.5,675.9" fill="none" stroke="#111" stroke-width="0.8" />
<path d="M504.3,675.9 L501.9,674.6 L501.9,677.1999999999999 Z" fill="#111"/>
<path d="M499.2,679.2 L502.5,679.2" fill="none" stroke="#111" stroke-width="0.8" />
<path d="M504.3,679.2 L501.9,677.9000000000001 L501.9,680.5 Z" fill="#111"/>
<path d="M448,692.4 L496,692.4" fill="none" stroke="#2e2e3c" stroke-width="1" />
<circle cx="472.5" cy="632.8" r="1.9" fill="#000"/>
<circle cx="472.5" cy="692.4" r="1.9" fill="#000"/>
<path d="M472.5,692.4 L472.5,710.5" fill="none" stroke="#2e2e3c" stroke-width="1" />
<path d="M469.5,607.5 L472.5,604.5 L475.5,607.5" fill="none" stroke="#444" stroke-width="1" />
<path d="M468.0,599 Q472.5,595.5 477.0,599" fill="none" stroke="#666" stroke-width="1"/>
<path d="M469.5,707.5 L472.5,710.5 L475.5,707.5" fill="none" stroke="#444" stroke-width="1" />
<path d="M468.0,714.5 Q472.5,718.0 477.0,714.5" fill="none" stroke="#666" stroke-width="1"/>
<path d="M614.9,605 L614.9,632.8" fill="none" stroke="#2e2e3c" stroke-width="1" />
<path d="M591,642.3 L591,632.8 L662.3,632.8 L662.3,642.3" fill="none" stroke="#2e2e3c" stroke-width="1" />
<path d="M591,642.3 L593.4,643.6312499999999 L588.6,646.2937499999999 L593.4,648.95625 L588.6,651.61875 L593.4,654.28125 L588.6,656.94375 L593.4,659.60625 L588.6,662.2687500000001 L591,663.6" fill="none" stroke="#444" stroke-width="1" />
<path d="M591,663.6 L591,692.4" fill="none" stroke="#2e2e3c" stroke-width="1" />
<circle cx="591" cy="677" r="9.8" fill="none" stroke="#3a3a48" stroke-width="0.75"/>
<path d="M588.2,675.1 L593.8,675.1 L591,679.6 Z" fill="#111"/>
<path d="M587.8,679.7 L594.2,679.7" fill="none" stroke="#111" stroke-width="0.8" />
<path d="M594.2,675.9 L597.5,675.9" fill="none" stroke="#111" stroke-width="0.8" />
<path d="M599.3,675.9 L596.9,674.6 L596.9,677.1999999999999 Z" fill="#111"/>
<path d="M594.2,679.2 L597.5,679.2" fill="none" stroke="#111" stroke-width="0.8" />
<path d="M599.3,679.2 L596.9,677.9000000000001 L596.9,680.5 Z" fill="#111"/>
<path d="M614.9,632.8 L614.9,642.3" fill="none" stroke="#2e2e3c" stroke-width="1" />
<path d="M614.9,642.3 L617.3,643.6312499999999 L612.5,646.2937499999999 L617.3,648.95625 L612.5,651.61875 L617.3,654.28125 L612.5,656.94375 L617.3,659.60625 L612.5,662.2687500000001 L614.9,663.6" fill="none" stroke="#444" stroke-width="1" />
<path d="M614.9,663.6 L614.9,692.4" fill="none" stroke="#2e2e3c" stroke-width="1" />
<circle cx="614.9" cy="677" r="9.8" fill="none" stroke="#3a3a48" stroke-width="0.75"/>
<path d="M612.1,675.1 L617.6999999999999,675.1 L614.9,679.6 Z" fill="#111"/>
<path d="M611.6999999999999,679.7 L618.1,679.7" fill="none" stroke="#111" stroke-width="0.8" />
<path d="M618.1,675.9 L621.4,675.9" fill="none" stroke="#111" stroke-width="0.8" />
<path d="M623.1999999999999,675.9 L620.8,674.6 L620.8,677.1999999999999 Z" fill="#111"/>
<path d="M618.1,679.2 L621.4,679.2" fill="none" stroke="#111" stroke-width="0.8" />
<path d="M623.1999999999999,679.2 L620.8,677.9000000000001 L620.8,680.5 Z" fill="#111"/>
<path d="M638.3,632.8 L638.3,642.3" fill="none" stroke="#2e2e3c" stroke-width="1" />
<path d="M638.3,642.3 L640.6999999999999,643.6312499999999 L635.9,646.2937499999999 L640.6999999999999,648.95625 L635.9,651.61875 L640.6999999999999,654.28125 L635.9,656.94375 L640.6999999999999,659.60625 L635.9,662.2687500000001 L638.3,663.6" fill="none" stroke="#444" stroke-width="1" />
<path d="M638.3,663.6 L638.3,692.4" fill="none" stroke="#2e2e3c" stroke-width="1" />
<circle cx="638.3" cy="677" r="9.8" fill="none" stroke="#3a3a48" stroke-width="0.75"/>
<path d="M635.5,675.1 L641.0999999999999,675.1 L638.3,679.6 Z" fill="#111"/>
<path d="M635.0999999999999,679.7 L641.5,679.7" fill="none" stroke="#111" stroke-width="0.8" />
<path d="M641.5,675.9 L644.8,675.9" fill="none" stroke="#111" stroke-width="0.8" />
<path d="M646.5999999999999,675.9 L644.1999999999999,674.6 L644.1999999999999,677.1999999999999 Z" fill="#111"/>
<path d="M641.5,679.2 L644.8,679.2" fill="none" stroke="#111" stroke-width="0.8" />
<path d="M646.5999999999999,679.2 L644.1999999999999,677.9000000000001 L644.1999999999999,680.5 Z" fill="#111"/>
<path d="M662.3,642.3 L664.6999999999999,643.6312499999999 L659.9,646.2937499999999 L664.6999999999999,648.95625 L659.9,651.61875 L664.6999999999999,654.28125 L659.9,656.94375 L664.6999999999999,659.60625 L659.9,662.2687500000001 L662.3,663.6" fill="none" stroke="#444" stroke-width="1" />
<path d="M662.3,663.6 L662.3,692.4" fill="none" stroke="#2e2e3c" stroke-width="1" />
<circle cx="662.3" cy="677" r="9.8" fill="none" stroke="#3a3a48" stroke-width="0.75"/>
<path d="M659.5,675.1 L665.0999999999999,675.1 L662.3,679.6 Z" fill="#111"/>
<path d="M659.0999999999999,679.7 L665.5,679.7" fill="none" stroke="#111" stroke-width="0.8" />
<path d="M665.5,675.9 L668.8,675.9" fill="none" stroke="#111" stroke-width="0.8" />
<path d="M670.5999999999999,675.9 L668.1999999999999,674.6 L668.1999999999999,677.1999999999999 Z" fill="#111"/>
<path d="M665.5,679.2 L668.8,679.2" fill="none" stroke="#111" stroke-width="0.8" />
<path d="M670.5999999999999,679.2 L668.1999999999999,677.9000000000001 L668.1999999999999,680.5 Z" fill="#111"/>
<path d="M591,692.4 L662.3,692.4" fill="none" stroke="#2e2e3c" stroke-width="1" />
<circle cx="614.9" cy="632.8" r="1.9" fill="#000"/>
<circle cx="638.3" cy="632.8" r="1.9" fill="#000"/>
<circle cx="614.9" cy="692.4" r="1.9" fill="#000"/>
<circle cx="638.3" cy="692.4" r="1.9" fill="#000"/>
<path d="M614.9,692.4 L614.9,710.5" fill="none" stroke="#2e2e3c" stroke-width="1" />
<path d="M611.9,607.5 L614.9,604.5 L617.9,607.5" fill="none" stroke="#444" stroke-width="1" />
<path d="M610.4,599 Q614.9,595.5 619.4,599" fill="none" stroke="#666" stroke-width="1"/>
<path d="M611.9,707.5 L614.9,710.5 L617.9,707.5" fill="none" stroke="#444" stroke-width="1" />
<path d="M610.4,714.5 Q614.9,718.0 619.4,714.5" fill="none" stroke="#666" stroke-width="1"/>
<path d="M329.8,597 L329.8,526 L472.5,526 L472.5,597" fill="none" stroke="#f08a8a" stroke-width="0.9" transform="translate(1.1,1.1)"/>
<path d="M329.8,597 L329.8,526 L472.5,526 L472.5,597" fill="none" stroke="#44a82e" stroke-width="2" />
<path d="M353.5,441 L353.5,597" fill="none" stroke="#f08a8a" stroke-width="0.9" transform="translate(1.1,1.1)"/>
<path d="M353.5,441 L353.5,597" fill="none" stroke="#44a82e" stroke-width="2" />
<path d="M377.2,597 L377.2,538 L614.9,538 L614.9,597" fill="none" stroke="#f08a8a" stroke-width="0.9" transform="translate(1.1,1.1)"/>
<path d="M377.2,597 L377.2,538 L614.9,538 L614.9,597" fill="none" stroke="#44a82e" stroke-width="2" />
<text transform="translate(324.5,582) rotate(-90)" text-anchor="start" font-size="7" fill="#4a4a4a">GRN/RED</text>
<text transform="translate(348,582) rotate(-90)" text-anchor="start" font-size="7" fill="#4a4a4a">GRN/RED</text>
<text transform="translate(371.5,586) rotate(-90)" text-anchor="start" font-size="7" fill="#4a4a4a">GRN/RED</text>
<text transform="translate(324.5,598) rotate(-90)" text-anchor="start" font-size="7" fill="#4a4a4a">5</text>
<text transform="translate(348,598) rotate(-90)" text-anchor="start" font-size="7" fill="#4a4a4a">6</text>
<text transform="translate(371.5,598) rotate(-90)" text-anchor="start" font-size="7" fill="#4a4a4a">4</text>
<text transform="translate(467,597) rotate(-90)" text-anchor="start" font-size="7" fill="#4a4a4a">1 GRN/RED</text>
<text transform="translate(610,597.5) rotate(-90)" text-anchor="start" font-size="7" fill="#4a4a4a">1</text>
<text transform="translate(610,581.5) rotate(-90)" text-anchor="start" font-size="7" fill="#4a4a4a">GRN/RED</text>
<path d="M282,441 L282,751.3 L329.8,751.3 L329.8,716" fill="none" stroke="#ff1414" stroke-width="2" />
<path d="M353.5,716 L353.5,751.3 L614.9,751.3 L614.9,716" fill="none" stroke="#ff1414" stroke-width="2" />
<path d="M377.2,716 L377.2,740.2 L472.5,740.2 L472.5,716" fill="none" stroke="#ff1414" stroke-width="2" />
<text transform="translate(324.5,741) rotate(-90)" text-anchor="start" font-size="7" fill="#4a4a4a">RED 12</text>
<text transform="translate(348,741) rotate(-90)" text-anchor="start" font-size="7" fill="#4a4a4a">RED 10</text>
<text transform="translate(371.5,741) rotate(-90)" text-anchor="start" font-size="7" fill="#4a4a4a">RED 11</text>
<text transform="translate(467,737) rotate(-90)" text-anchor="start" font-size="7" fill="#4a4a4a">RED 7</text>
<text transform="translate(610,740.5) rotate(-90)" text-anchor="start" font-size="7" fill="#4a4a4a">RED</text>
<text transform="translate(610,720.5) rotate(-90)" text-anchor="start" font-size="7" fill="#4a4a4a">5</text>
<rect x="13" y="409" width="50.8" height="91" fill="#d9d9fb" stroke="#5a5a68" stroke-width="1.1" />
<path d="M63,418.8 L20.5,418.8 L20.5,442.6 L63,442.6" fill="none" stroke="#555" stroke-width="1" />
<circle cx="44.9" cy="442.4" r="10" fill="none" stroke="#555" stroke-width="0.8"/>
<path d="M42.5,442.6 L47.6,439.8 L47.6,445.2 Z" fill="#111"/>
<path d="M42.3,439.8 L42.3,446" fill="none" stroke="#111" stroke-width="1" />
<path d="M43.5,445 L43.5,449" fill="none" stroke="#111" stroke-width="0.8" />
<path d="M43.5,451 L42.2,448.5 L44.8,448.5 Z" fill="#111"/>
<path d="M47,445 L47,449" fill="none" stroke="#111" stroke-width="0.8" />
<path d="M47,451 L45.7,448.5 L48.3,448.5 Z" fill="#111"/>
<path d="M20.5,489.7 L20.5,455 L34.4,455" fill="none" stroke="#555" stroke-width="1" />
<path d="M20.5,489.7 L63,489.7" fill="none" stroke="#555" stroke-width="1" />
<circle cx="34.4" cy="455" r="1.9" fill="#000"/>
<circle cx="34.4" cy="478.3" r="1.9" fill="#000"/>
<circle cx="54.3" cy="466.5" r="1.9" fill="#000"/>
<path d="M34.4,478.3 L54.3,466.5" fill="none" stroke="#333" stroke-width="1" />
<path d="M54.3,466.5 L63,466.5" fill="none" stroke="#555" stroke-width="1" />
<path d="M36.5,477 L39.5,472.5 L41,476 Z" fill="#333"/>
<path d="M60.3,415.8 L63.3,418.8 L60.3,421.8" fill="none" stroke="#4a4a58" stroke-width="1" />
<path d="M66,414.3 Q71,418.8 66,423.3" fill="none" stroke="#666" stroke-width="1"/>
<path d="M60.3,439.6 L63.3,442.6 L60.3,445.6" fill="none" stroke="#4a4a58" stroke-width="1" />
<path d="M66,438.1 Q71,442.6 66,447.1" fill="none" stroke="#666" stroke-width="1"/>
<path d="M60.3,463.5 L63.3,466.5 L60.3,469.5" fill="none" stroke="#4a4a58" stroke-width="1" />
<path d="M66,462.0 Q71,466.5 66,471.0" fill="none" stroke="#666" stroke-width="1"/>
<path d="M60.3,486.7 L63.3,489.7 L60.3,492.7" fill="none" stroke="#4a4a58" stroke-width="1" />
<path d="M66,485.2 Q71,489.7 66,494.2" fill="none" stroke="#666" stroke-width="1"/>
<text x="12" y="508" text-anchor="start" font-size="7" fill="#4a4a4a">AMBIENT LIGHT SWITCH</text>
<text x="12" y="517" text-anchor="start" font-size="7" fill="#4a4a4a">(IF EQUIPPED)</text>
<path d="M68,489.7 L187,489.7 L187,656.8 L93,656.8" fill="none" stroke="#cfcfcf" stroke-width="1.5" />
<path d="M68,538 L184,538" fill="none" stroke="#cfcfcf" stroke-width="1.5" />
<circle cx="187" cy="538" r="2.2" fill="#000"/>
<rect x="13" y="527.7" width="50.8" height="32.5" fill="#d9d9fb" stroke="#5a5a68" stroke-width="1.1" />
<path d="M26,537.6 L16.7,537.6 L16.7,549.5 L63,549.5" fill="none" stroke="#555" stroke-width="1" />
<path d="M26,537.6 L27.25,535.3000000000001 L29.75,539.9 L32.25,535.3000000000001 L34.75,539.9 L37.25,535.3000000000001 L39.75,539.9 L42.25,535.3000000000001 L44.75,539.9 L46,537.6" fill="none" stroke="#555" stroke-width="1" />
<path d="M46,537.6 L63,537.6" fill="none" stroke="#555" stroke-width="1" />
<path d="M60.3,534.6 L63.3,537.6 L60.3,540.6" fill="none" stroke="#4a4a58" stroke-width="1" />
<path d="M66,533.1 Q71,537.6 66,542.1" fill="none" stroke="#666" stroke-width="1"/>
<path d="M60.3,546.5 L63.3,549.5 L60.3,552.5" fill="none" stroke="#4a4a58" stroke-width="1" />
<path d="M66,545.0 Q71,549.5 66,554.0" fill="none" stroke="#666" stroke-width="1"/>
<text x="71" y="534" text-anchor="start" font-size="7" fill="#4a4a4a">3</text>
<text x="89.5" y="534" text-anchor="start" font-size="7" fill="#4a4a4a">WHT</text>
<text x="71" y="546" text-anchor="start" font-size="7" fill="#4a4a4a">1</text>
<text x="89.5" y="546" text-anchor="start" font-size="7" fill="#4a4a4a">BLU</text>
<text x="11.6" y="566.8" text-anchor="start" font-size="7" fill="#4a4a4a">AMBIENT LIGHT RESISTOR</text>
<path d="M68,549.5 L175,549.5 L175,585.3 L93,585.3" fill="none" stroke="#1a1aff" stroke-width="2" />
<rect x="15.4" y="579.3" width="37.2" height="49.0" fill="#d9d9fb" stroke="#5a5a68" stroke-width="1.1" />
<path d="M88,585.3 L32.2,585.3 L32.2,621.3 L88,621.3" fill="none" stroke="#222" stroke-width="1.5" />
<circle cx="32.2" cy="603.3" r="10" fill="none" stroke="#555" stroke-width="0.8"/>
<path d="M28.5,600.8 L36,600.8 L32.2,605.8 Z" fill="#111"/>
<path d="M28.5,606.0 L36,606.0" fill="none" stroke="#111" stroke-width="0.9" />
<path d="M35,601.3 L40,601.3" fill="none" stroke="#111" stroke-width="0.8" />
<path d="M41,601.3 L38.5,599.6999999999999 L38.5,602.9 Z" fill="#111"/>
<path d="M35,605.3 L40,605.3" fill="none" stroke="#111" stroke-width="0.8" />
<path d="M41,605.3 L38.5,603.6999999999999 L38.5,606.9 Z" fill="#111"/>
<path d="M86.5,580.8 Q91.5,585.3 86.5,589.8" fill="none" stroke="#555" stroke-width="1"/>
<path d="M90,580.8 Q95,585.3 90,589.8" fill="none" stroke="#555" stroke-width="1"/>
<path d="M86.5,616.8 Q91.5,621.3 86.5,625.8" fill="none" stroke="#555" stroke-width="1"/>
<path d="M90,616.8 Q95,621.3 90,625.8" fill="none" stroke="#555" stroke-width="1"/>
<text x="63.8" y="580.3" text-anchor="start" font-size="7" fill="#4a4a4a">NCA</text>
<text x="93" y="580.3" text-anchor="start" font-size="7" fill="#4a4a4a">2</text>
<text x="105" y="580.3" text-anchor="start" font-size="7" fill="#4a4a4a">BLU</text>
<text x="63.8" y="616.3" text-anchor="start" font-size="7" fill="#4a4a4a">NCA</text>
<text x="93" y="616.3" text-anchor="start" font-size="7" fill="#4a4a4a">1</text>
<text x="105" y="616.3" text-anchor="start" font-size="7" fill="#4a4a4a">BLK</text>
<text x="11.6" y="638.6" text-anchor="start" font-size="7" fill="#4a4a4a">DRIVER'S AMBIENT LIGHT</text>
<rect x="15.4" y="650.5" width="37.2" height="49.0" fill="#d9d9fb" stroke="#5a5a68" stroke-width="1.1" />
<path d="M88,656.8 L32.2,656.8 L32.2,692.5 L88,692.5" fill="none" stroke="#222" stroke-width="1.5" />
<circle cx="32.2" cy="674.65" r="10" fill="none" stroke="#555" stroke-width="0.8"/>
<path d="M28.5,672.15 L36,672.15 L32.2,677.15 Z" fill="#111"/>
<path d="M28.5,677.35 L36,677.35" fill="none" stroke="#111" stroke-width="0.9" />
<path d="M35,672.65 L40,672.65" fill="none" stroke="#111" stroke-width="0.8" />
<path d="M41,672.65 L38.5,671.05 L38.5,674.25 Z" fill="#111"/>
<path d="M35,676.65 L40,676.65" fill="none" stroke="#111" stroke-width="0.8" />
<path d="M41,676.65 L38.5,675.05 L38.5,678.25 Z" fill="#111"/>
<path d="M86.5,652.3 Q91.5,656.8 86.5,661.3" fill="none" stroke="#555" stroke-width="1"/>
<path d="M90,652.3 Q95,656.8 90,661.3" fill="none" stroke="#555" stroke-width="1"/>
<path d="M86.5,688.0 Q91.5,692.5 86.5,697.0" fill="none" stroke="#555" stroke-width="1"/>
<path d="M90,688.0 Q95,692.5 90,697.0" fill="none" stroke="#555" stroke-width="1"/>
<text x="63.8" y="650.8" text-anchor="start" font-size="7" fill="#4a4a4a">NCA</text>
<text x="93" y="650.8" text-anchor="start" font-size="7" fill="#4a4a4a">2</text>
<text x="105" y="650.8" text-anchor="start" font-size="7" fill="#4a4a4a">WHT</text>
<text x="63.8" y="686.5" text-anchor="start" font-size="7" fill="#4a4a4a">NCA</text>
<text x="93" y="686.5" text-anchor="start" font-size="7" fill="#4a4a4a">1</text>
<text x="105" y="686.5" text-anchor="start" font-size="7" fill="#4a4a4a">BLK</text>
<text x="15" y="707" text-anchor="start" font-size="7" fill="#4a4a4a">FRONT PASSENGER'S</text>
<text x="15" y="716" text-anchor="start" font-size="7" fill="#4a4a4a">AMBIENT LIGHT</text>
<path d="M93,621.3 L175,621.3 L175,692.5 L93,692.5" fill="none" stroke="#333" stroke-width="1.5" />
<circle cx="175" cy="692.5" r="2.3" fill="#000"/>
<path d="M175,697 L175,736" fill="none" stroke="#86681a" stroke-width="2" stroke-dasharray="7,4"/>
<text transform="translate(170.5,722) rotate(-90)" text-anchor="start" font-size="7" fill="#4a4a4a">BRN</text>
<path d="M172.5,742.3 A2.5,2.5 0 1 1 177.5,742.3 Z" fill="#000"/>
<path d="M170,742.5 L180,742.5" fill="none" stroke="#111" stroke-width="1" />
<path d="M172,744.5 L178,744.5" fill="none" stroke="#222" stroke-width="1" />
<path d="M174,746.5 L176.5,746.5" fill="none" stroke="#222" stroke-width="1" />
<text x="176" y="754" text-anchor="middle" font-size="7" fill="#4a4a4a">G501</text>
<text x="176" y="763.8" text-anchor="middle" font-size="7" fill="#4a4a4a">(UNDER LEFT</text>
<text x="176" y="772.8" text-anchor="middle" font-size="7" fill="#4a4a4a">SIDE OF DASH)</text>
<text x="15" y="781" text-anchor="start" font-size="7" fill="#4a4a4a">319367</text>
</svg></body></html>
